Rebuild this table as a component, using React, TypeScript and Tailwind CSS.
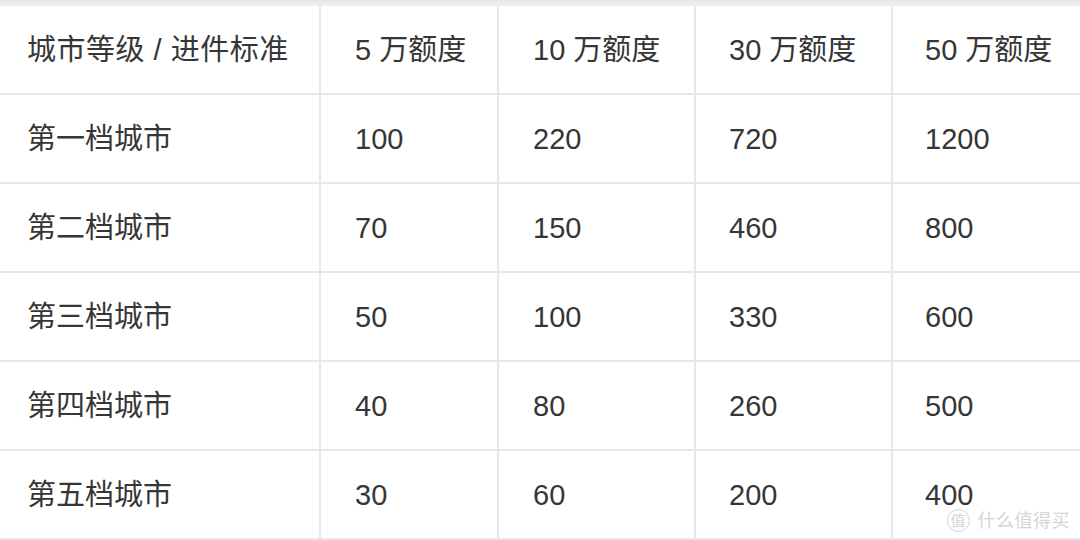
import React from 'react';

const header = ['城市等级 / 进件标准', '5 万额度', '10 万额度', '30 万额度', '50 万额度'];

const rows = [
  ['第一档城市', '100', '220', '720', '1200'],
  ['第二档城市', '70', '150', '460', '800'],
  ['第三档城市', '50', '100', '330', '600'],
  ['第四档城市', '40', '80', '260', '500'],
  ['第五档城市', '30', '60', '200', '400'],
];

const colClass = [
  'w-[321px] pl-[27px] border-r-2',
  'w-[178px] pl-[34px] border-r-2',
  'w-[197px] pl-[34px] border-r-2',
  'w-[197px] pl-[33px] border-r-2',
  'flex-1 pl-[32px]',
];

function Row({ cells, head }: { cells: string[]; head?: boolean }) {
  return (
    <div className="flex h-[89px] border-b-2 border-[#e8e8e8]">
      {cells.map((c, i) => (
        <div key={i} className={`${colClass[i]} flex items-center border-[#e8e8e8] pt-[3px]`}>
          <span className={`whitespace-pre ${head && i === 0 ? 'tracking-[0.5px]' : ''}`}>{c}</span>
        </div>
      ))}
    </div>
  );
}

export default function App() {
  return (
    <div
      className="relative w-[1080px] h-[540px] overflow-hidden bg-white text-[29px] text-[#363636]"
      style={{ fontFamily: '"Liberation Sans", "Noto Sans CJK SC", sans-serif' }}
    >
      <div className="h-[6px] bg-gradient-to-b from-[#e6e6e6] to-[#f0f0f0]" />
      <Row cells={header} head />
      {rows.map((r, i) => (
        <Row key={i} cells={r} />
      ))}

      {/* watermark */}
      <div className="absolute right-[10px] bottom-[8px] flex items-center gap-[8px] text-[#d4d4d4]">
        <div className="flex h-[23px] w-[23px] items-center justify-center rounded-full border border-[#d4d4d4] text-[15px] leading-none">
          值
        </div>
        <span className="text-[18px] leading-none tracking-[0.5px]">什么值得买</span>
      </div>
    </div>
  );
}
